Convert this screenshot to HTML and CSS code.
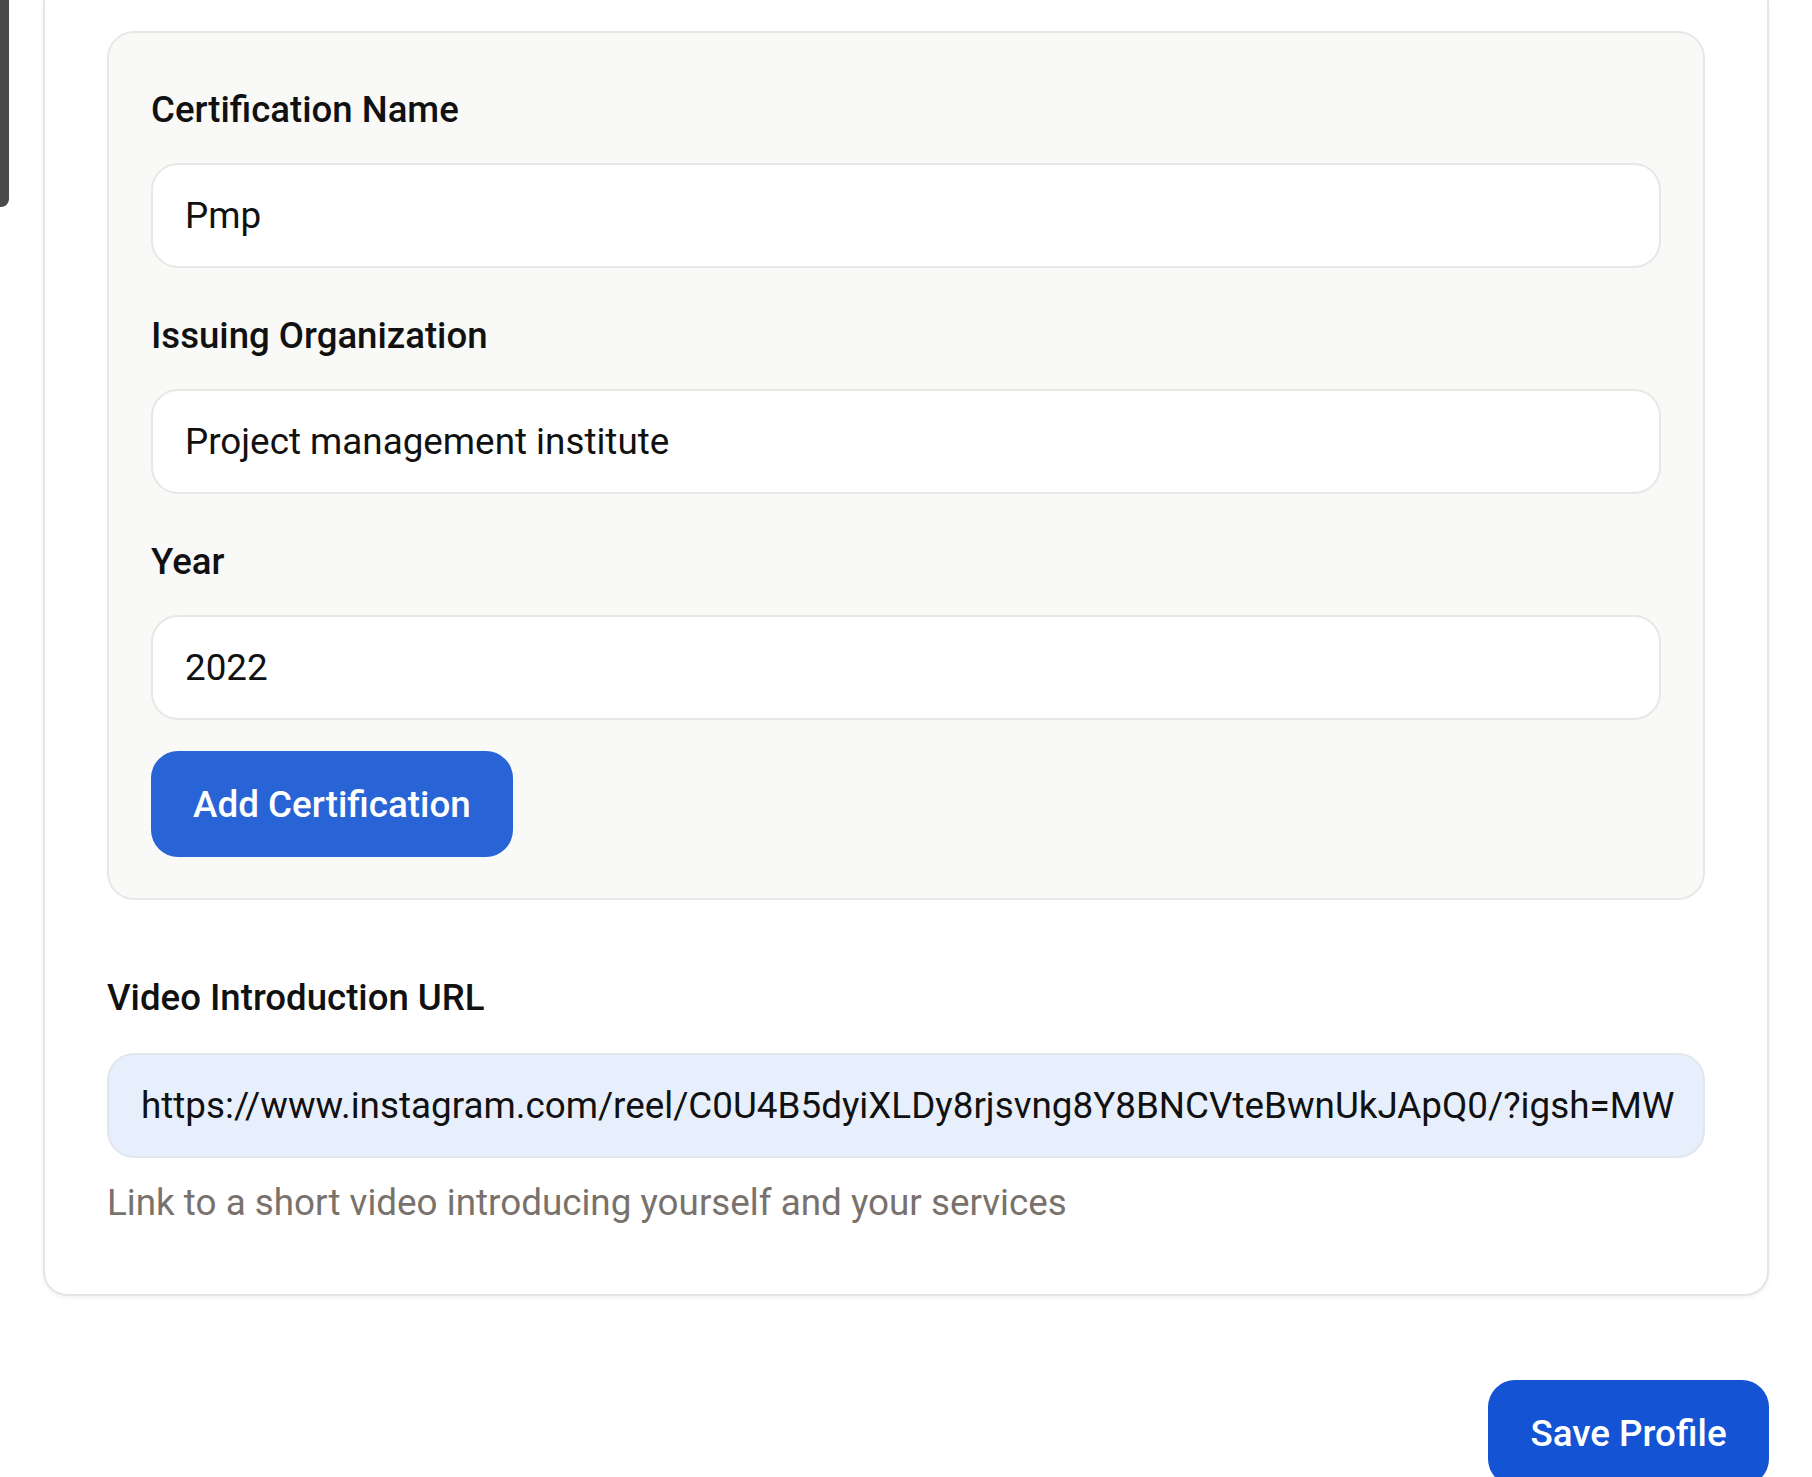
FILE: index.html
```html
<!DOCTYPE html>
<html lang="en">
<head>
<meta charset="utf-8">
<title>Profile</title>
<link rel="stylesheet" href="styles.css">
</head>
<body>
<div class="scroll-thumb"></div>
<main class="page">
  <section class="profile-card">
    <div class="cert-box">
      <div class="field">
        <label class="label" for="cert-name">Certification Name</label>
        <input class="input" id="cert-name" type="text" value="Pmp" readonly>
      </div>
      <div class="field">
        <label class="label" for="cert-org">Issuing Organization</label>
        <input class="input" id="cert-org" type="text" value="Project management institute" readonly>
      </div>
      <div class="field">
        <label class="label" for="cert-year">Year</label>
        <input class="input" id="cert-year" type="text" value="2022" readonly>
      </div>
      <button class="btn btn-add" type="button">Add Certification</button>
    </div>

    <div class="field video-field">
      <label class="label label-video" for="video-url">Video Introduction URL</label>
      <input class="input input-filled" id="video-url" type="text" value="https://www.instagram.com/reel/C0U4B5dyiXLDy8rjsvng8Y8BNCVteBwnUkJApQ0/?igsh=MW" readonly>
      <p class="hint">Link to a short video introducing yourself and your services</p>
    </div>
  </section>

  <div class="actions">
    <button class="btn btn-save" type="button">Save Profile</button>
  </div>
</main>
</body>
</html>
```
FILE: styles.css
```css
* {
  box-sizing: border-box;
}

html, body {
  margin: 0;
  padding: 0;
  background: #ffffff;
}

body {
  font-family: Roboto, "Liberation Sans", Arial, sans-serif;
  color: #111111;
  overflow: hidden;
  height: 1477px;
}

.scroll-thumb {
  position: absolute;
  left: 0;
  top: 0;
  width: 9px;
  height: 207px;
  background: #4a4a4a;
  border-bottom-right-radius: 8px;
}

.page {
  padding: 0 43px 0 43px;
}

.profile-card {
  border: 2px solid #e7e5e4;
  border-top: none;
  border-radius: 0 0 24px 24px;
  padding: 31px 62px 66px 62px;
  box-shadow: 0 2px 4px rgba(0, 0, 0, 0.05);
  background: #ffffff;
}

.cert-box {
  background: #f9f9f8;
  border: 2px solid #e9e7e5;
  border-radius: 27px;
  padding: 52px 42px 41px 42px;
  display: flex;
  flex-direction: column;
  align-items: flex-start;
}

.field {
  display: flex;
  flex-direction: column;
  width: 100%;
  margin-bottom: 43px;
}

.cert-box .field:last-of-type {
  margin-bottom: 31px;
}

.label {
  font-size: 36.6px;
  font-weight: 500;
  line-height: 50px;
  color: #111111;
  margin-bottom: 28px;
}

.label-video {
  margin-bottom: 30px;
}

.input {
  width: 100%;
  height: 105px;
  border: 2px solid #e9e7e5;
  border-radius: 27px;
  background: #ffffff;
  padding: 0 16px 0 32px;
  font-family: inherit;
  font-size: 36.8px;
  color: #111111;
  outline: none;
}

.input-filled {
  background: #e8effc;
  border-color: #e1e6ee;
}

.btn {
  font-family: inherit;
  font-size: 36.8px;
  font-weight: 500;
  color: #ffffff;
  border: none;
  border-radius: 27px;
  height: 106px;
  padding: 0 42px;
  cursor: pointer;
}

.btn-add {
  background: #2964d7;
}

.video-field {
  margin-top: 73px;
  margin-bottom: 0;
}

.hint {
  margin: 20px 0 0 0;
  font-size: 36.8px;
  line-height: 50px;
  color: #78716c;
}

.actions {
  display: flex;
  justify-content: flex-end;
  margin-top: 84px;
}

.btn-save {
  background: #1453d3;
  width: 281px;
  padding: 0;
}
```
